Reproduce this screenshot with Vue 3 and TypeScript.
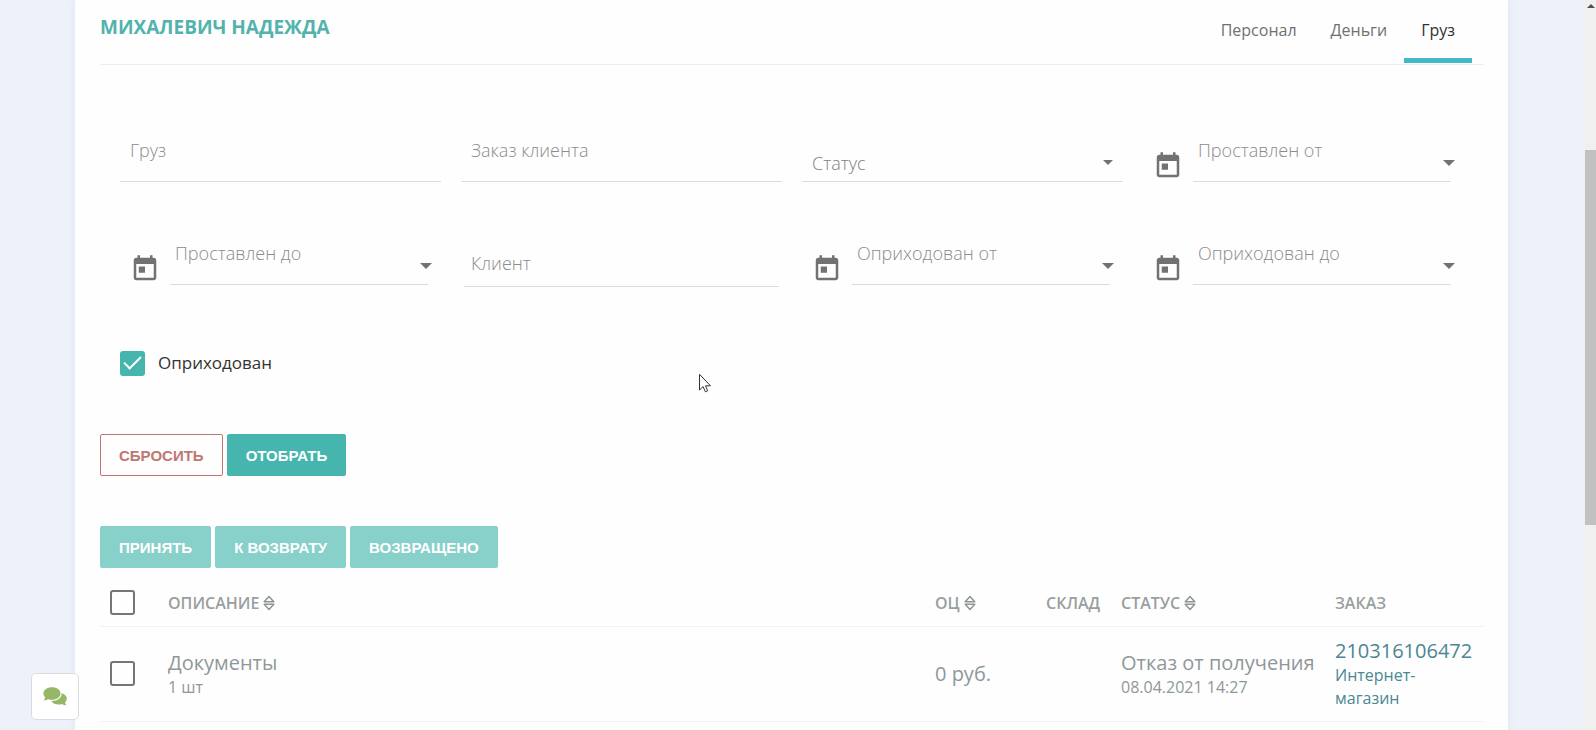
<script setup lang="ts">
import { ref } from 'vue'

type Kind = 'text' | 'low' | 'select' | 'date'
interface Field { id: string; label: string; kind: Kind }

const tabs = ['Персонал', 'Деньги', 'Груз']
const activeTab = ref('Груз')

const fields: Field[] = [
  { id: 'cargo', label: 'Груз', kind: 'text' },
  { id: 'order', label: 'Заказ клиента', kind: 'text' },
  { id: 'status', label: 'Статус', kind: 'select' },
  { id: 'put-from', label: 'Проставлен от', kind: 'date' },
  { id: 'put-to', label: 'Проставлен до', kind: 'date' },
  { id: 'client', label: 'Клиент', kind: 'low' },
  { id: 'in-from', label: 'Оприходован от', kind: 'date' },
  { id: 'in-to', label: 'Оприходован до', kind: 'date' },
]
const values = ref<Record<string, string>>(Object.fromEntries(fields.map((f) => [f.id, ''])))
const received = ref(true)

const columns = [
  { key: 'desc', title: 'ОПИСАНИЕ', sortable: true },
  { key: 'price', title: 'ОЦ', sortable: true },
  { key: 'store', title: 'СКЛАД', sortable: false },
  { key: 'status', title: 'СТАТУС', sortable: true },
  { key: 'order', title: 'ЗАКАЗ', sortable: false },
]
const rows = ref([
  {
    name: 'Документы', amount: '1 шт', price: '0 руб.', status: 'Отказ от получения',
    date: '08.04.2021 14:27', order: '210316106472', client: 'Интернет-магазин', picked: false,
  },
])
const allPicked = ref(false)

function reset() {
  for (const f of fields) values.value[f.id] = ''
  received.value = false
}
</script>

<template>
  <div class="page">
    <main class="card">
      <header class="head">
        <h1>МИХАЛЕВИЧ НАДЕЖДА</h1>
        <nav class="tabs">
          <a
            v-for="t in tabs" :key="t" href="#" class="tab" :class="{ active: t === activeTab }"
            @click.prevent="activeTab = t"
          >{{ t }}</a>
        </nav>
      </header>

      <form @submit.prevent>
        <div class="filters">
          <div v-for="f in fields" :key="f.id" class="cell" :class="f.kind">
            <svg v-if="f.kind === 'date'" class="calendar" viewBox="0 0 24 24" aria-hidden="true">
              <path d="M19 3h-1V1h-2v2H8V1H6v2H5c-1.110 0-1.990.9-1.990 2L3 19c0 1.100.890 2 2 2h14c1.100 0 2-.9 2-2V5c0-1.100-.9-2-2-2zm0 16H5V8h14v11zM7 10h5v5H7z" />
            </svg>
            <div class="field">
              <select v-if="f.kind === 'select'" :id="f.id" v-model="values[f.id]" class="control" :aria-label="f.label">
                <option value="">{{ f.label }}</option>
              </select>
              <template v-else>
                <input :id="f.id" v-model="values[f.id]" type="text" class="control">
                <label v-show="!values[f.id]" :for="f.id">{{ f.label }}</label>
              </template>
              <svg v-if="f.kind === 'select' || f.kind === 'date'" class="arrow" viewBox="0 0 12 6" aria-hidden="true">
                <path d="M0 0h12L6 6z" />
              </svg>
            </div>
          </div>
        </div>

        <label class="check">
          <input v-model="received" type="checkbox" class="box">
          <span>Оприходован</span>
        </label>

        <div class="buttons">
          <button type="button" class="btn outline" @click="reset">СБРОСИТЬ</button>
          <button type="submit" class="btn">ОТОБРАТЬ</button>
        </div>
      </form>

      <div class="buttons actions">
        <button type="button" class="btn" disabled>ПРИНЯТЬ</button>
        <button type="button" class="btn" disabled>К ВОЗВРАТУ</button>
        <button type="button" class="btn" disabled>ВОЗВРАЩЕНО</button>
      </div>

      <table>
        <thead>
          <tr>
            <th class="pick"><input v-model="allPicked" type="checkbox" class="box" aria-label="Выбрать все"></th>
            <th v-for="c in columns" :key="c.key" :class="c.key">
              {{ c.title }}<svg v-if="c.sortable" class="sort" viewBox="0 0 12 16" aria-hidden="true">
                <path d="M6 1.500L10.800 6.700H1.200zM6 14.500l4.800-5.200H1.200z" />
              </svg>
            </th>
          </tr>
        </thead>
        <tbody>
          <tr v-for="r in rows" :key="r.order">
            <td><input v-model="r.picked" type="checkbox" class="box" :aria-label="r.name"></td>
            <td><div class="big">{{ r.name }}</div><div>{{ r.amount }}</div></td>
            <td><div class="big">{{ r.price }}</div></td>
            <td></td>
            <td><div class="big">{{ r.status }}</div><div>{{ r.date }}</div></td>
            <td>
              <a href="#" class="link big">{{ r.order }}</a>
              <a href="#" class="link">{{ r.client }}</a>
            </td>
          </tr>
        </tbody>
      </table>
    </main>

    <button type="button" class="chat" aria-label="Чат">
      <svg viewBox="0 0 24 19" aria-hidden="true">
        <path d="M18.500 6.200c3.200.7 5.300 2.700 5.300 5.300 0 1.600-.7 3-1.900 4 .2 1 .8 1.800 1.600 2.600-1.700.1-3.200-.3-4.500-1.200-4.300 1.300-8.800.3-10.700-3 6 .1 10.700-3 10.200-7.700z" />
        <path d="M9 .2c4.800 0 8.600 2.700 8.600 6.300S13.800 12.800 9 12.800c-1.300 0-2.600-.2-3.700-.6-1.300.9-2.900 1.300-4.800 1.100C1.400 12.400 2 11.500 2.200 10.400 1 9.300.4 8 .4 6.500.4 2.900 4.200.2 9 .2z" />
      </svg>
    </button>

    <svg class="pointer" viewBox="0 0 12 19" aria-hidden="true">
      <path d="M.5.8v15.700l3.600-3.400 2.300 5.200 2.300-1-2.200-5H11.500z" />
    </svg>

    <div class="scroll" aria-hidden="true">
      <svg viewBox="0 0 8 4"><path d="M0 4l4-4 4 4z" /></svg>
      <div class="thumb"></div>
    </div>
  </div>
</template>

<style>
html, body { margin: 0; overflow: hidden; }
</style>

<style scoped>
* { box-sizing: border-box; }

.page {
  height: 100vh;
  padding: 0 88px 0 75px;
  overflow: hidden;
  background: linear-gradient(#f0f0f0, #f0f0f0) bottom / 100% 2px no-repeat #edf1fa;
  font-family: "Open Sans", "Noto Sans", sans-serif;
  font-size: 16px;
  color: #8f9898;
}

.card {
  min-height: 100vh;
  padding: 0 24px 0 25px;
  background: #fefefe;
  box-shadow: 0 0 8px #dfe5ee;
}

.head {
  display: flex;
  justify-content: space-between;
  height: 65px;
  padding-right: 12px;
  border-bottom: 1px solid #ededed;
}

h1 {
  margin: 0;
  font-size: 19px;
  line-height: 54px;
  font-weight: 700;
  color: #52b3ad;
}

.tabs { display: flex; }

.tab {
  height: 63px;
  padding: 0 17px;
  line-height: 60px;
  color: #707070;
  text-decoration: none;
}

.tab.active {
  color: #303030;
  border-bottom: 5px solid #41b9c6;
}

.filters {
  display: grid;
  grid-template-columns: repeat(4, 1fr);
  gap: 0 20px;
  grid-auto-rows: 103px;
  padding: 65px 20px 0;
}

.cell {
  display: flex;
  align-items: flex-start;
}

.calendar {
  flex: none;
  width: 30px;
  height: 30px;
  margin: 21px 10px 0 10px;
  fill: #727272;
}

.field {
  flex: 1;
  min-width: 0;
  display: grid;
  grid-template-rows: 100%;
  height: 52px;
}

.field > * { grid-area: 1 / 1; }

.date .field { margin-right: 13px; }

.low .field {
  height: 54px;
  margin: 0 3px;
}

.field label {
  padding: 0 10px;
  font-size: 18px;
  font-weight: 300;
  line-height: 40px;
  color: #8c8c8c;
  pointer-events: none;
}

.date .field label { padding: 0 5px; }

.low .field label {
  padding: 0 7px;
  line-height: 60px;
}

.control {
  width: 100%;
  height: 100%;
  padding: 0 10px;
  border: 0;
  border-bottom: 1px solid #dcdcdc;
  border-radius: 0;
  outline: 0;
  background: transparent;
  font-family: inherit;
  font-size: 18px;
}

select.control {
  appearance: none;
  padding-top: 15px;
  font-weight: 300;
  color: #808080;
}

.arrow {
  justify-self: end;
  width: 12px;
  height: 6px;
  margin: 30px -4px 0 0;
  fill: #727272;
  pointer-events: none;
}

.select .arrow {
  width: 10px;
  height: 5px;
  margin-right: 10px;
}

.box {
  appearance: none;
  display: block;
  flex: none;
  width: 25px;
  height: 25px;
  margin: 0;
  border: 2px solid #757575;
  border-radius: 3px;
  background: transparent;
}

.box:checked {
  border: 0;
  background: #45b5ae;
  display: grid;
  place-items: center;
}

.box:checked::before {
  content: "";
  width: 15px;
  height: 7px;
  margin-bottom: 5px;
  border: solid #fff;
  border-width: 0 0 2px 2px;
  rotate: -45deg;
}

.check {
  display: flex;
  align-items: center;
  gap: 13px;
  width: max-content;
  margin: 14px 0 58px 20px;
  font-size: 17px;
  line-height: 26px;
  color: #333;
}

.buttons {
  display: flex;
  gap: 4px;
}

.actions { margin-top: 50px; }

.btn {
  height: 42px;
  padding: 0 18px;
  border: 1px solid #45b5ae;
  border-radius: 2px;
  background: #45b5ae;
  font: 700 15px "Liberation Sans", Arial, sans-serif;
  color: #fff;
}

.btn.outline {
  border-color: #c07770;
  background: transparent;
  color: #c07770;
}

.btn:disabled {
  border-color: #88d0ca;
  background: #88d0ca;
}

table {
  width: 100%;
  table-layout: fixed;
  border-collapse: collapse;
}

th, td {
  padding: 0 10px;
  border-bottom: 1px solid #f1f1f1;
  text-align: left;
  line-height: 23px;
  vertical-align: middle;
}

th {
  height: 58px;
  padding-top: 14px;
  font-weight: 600;
  white-space: nowrap;
  color: #999e9e;
}

th.pick { padding-top: 12px; }

td { height: 95px; }

.pick { width: 58px; }
.price { width: 111px; }
.store { width: 75px; }
.status { width: 214px; }
.order { width: 159px; }

.sort {
  width: 12px;
  height: 16px;
  margin-left: 4px;
  vertical-align: -2px;
  fill: none;
  stroke: #8f9494;
  stroke-width: 1.500;
  stroke-linejoin: round;
}

.big {
  font-size: 20px;
  line-height: 27px;
}

.link {
  display: block;
  color: #4a8792;
  text-decoration: none;
}

.chat {
  position: fixed;
  left: 31px;
  bottom: 10px;
  display: grid;
  place-items: center;
  width: 48px;
  height: 47px;
  padding: 0;
  border: 1px solid #dcdcdc;
  border-radius: 5px;
  background: #fff;
}

.chat svg {
  width: 24px;
  height: 19px;
  fill: #96b866;
  stroke: #fff;
  stroke-width: 1;
  paint-order: stroke;
}

.pointer {
  position: fixed;
  left: 699px;
  top: 373px;
  width: 12px;
  height: 20px;
  fill: #fff;
  stroke: #333;
}

.scroll {
  position: fixed;
  inset: 0 0 0 auto;
  width: 13px;
  padding: 4px 0 0 2px;
  background: #f0f0f0;
}

.scroll svg {
  display: block;
  width: 8px;
  height: 4px;
  margin-left: 2px;
  fill: #505050;
}

.thumb {
  height: 375px;
  margin-top: 142px;
  background: #c1c1c1;
}
</style>
